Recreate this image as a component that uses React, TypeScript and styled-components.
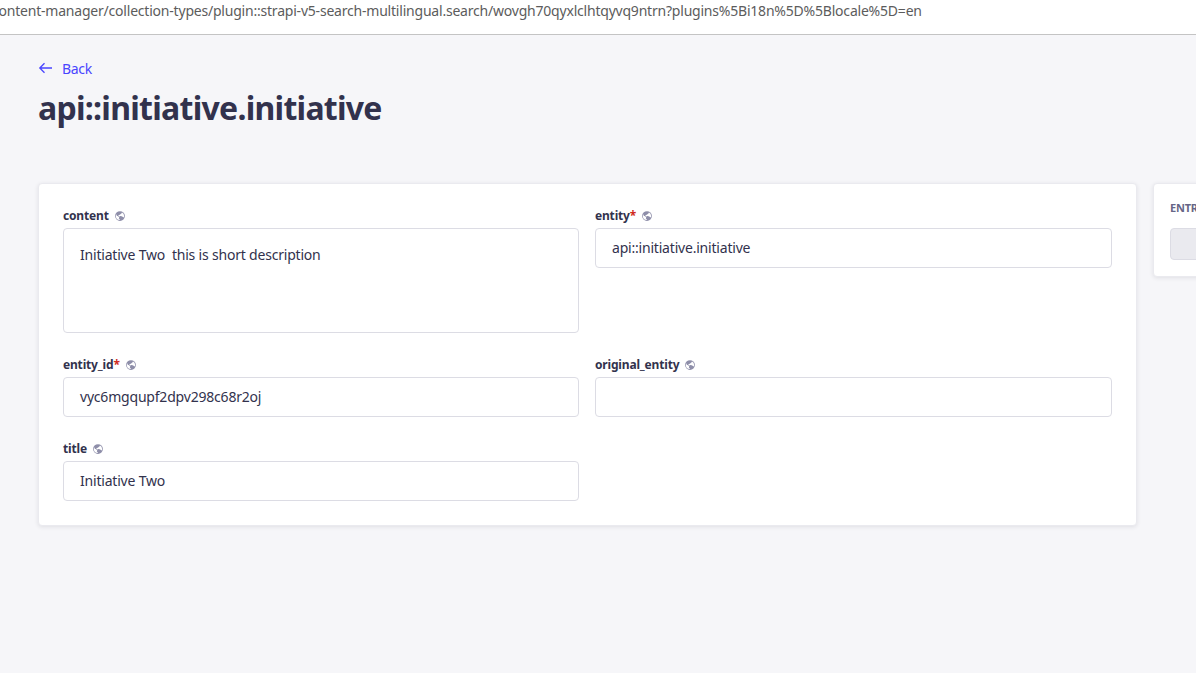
import styled, { createGlobalStyle } from 'styled-components';
import { PiGlobeHemisphereWestFill } from 'react-icons/pi';

const URL_TEXT =
  'content-manager/collection-types/plugin::strapi-v5-search-multilingual.search/wovgh70qyxlclhtqyvq9ntrn?plugins%5Bi18n%5D%5Blocale%5D=en';

type FieldProps = {
  name: string;
  value?: string;
  required?: boolean;
  multiline?: boolean;
};

function Field({ name, value = '', required, multiline }: FieldProps) {
  return (
    <FieldWrap>
      <Label>
        {name}
        {required && <Star>*</Star>}
        <Globe />
      </Label>
      <Box $multiline={multiline}>{value}</Box>
    </FieldWrap>
  );
}

export default function App() {
  return (
    <>
      <GlobalStyle />
      <Page>
        <UrlBar>
          <UrlText>{URL_TEXT}</UrlText>
        </UrlBar>
        <Main>
          <BackLink>
            <svg viewBox="0 0 14 12" width="14" height="12" fill="none" stroke="currentColor" strokeWidth="1.3">
              <path d="M14 6H2M6.5 1.2 1.8 6l4.7 4.8" />
            </svg>
            Back
          </BackLink>
          <Title>api::initiative.initiative</Title>
          <Panels>
            <FormCard>
              <Field name="content" value="Initiative Two  this is short description" multiline />
              <Field name="entity" value="api::initiative.initiative" required />
              <Field name="entity_id" value="vyc6mgqupf2dpv298c68r2oj" required />
              <Field name="original_entity" />
              <Field name="title" value="Initiative Two" />
            </FormCard>
            <SideCard>
              <SideLabel>ENTRY</SideLabel>
              <SideButton />
            </SideCard>
          </Panels>
        </Main>
      </Page>
    </>
  );
}

const GlobalStyle = createGlobalStyle`
  html, body {
    margin: 0;
    padding: 0;
    background: #f6f6f9;
  }
  * { box-sizing: border-box; }
`;

const Page = styled.div`
  width: 1196px;
  height: 673px;
  overflow: hidden;
  background: #f6f6f9;
  font-family: "Noto Sans", sans-serif;
  color: #32324d;
`;

const UrlBar = styled.div`
  height: 35px;
  background: #ffffff;
  border-bottom: 1px solid #c4c4c4;
  display: flex;
  align-items: flex-start;
  padding-top: 1px;
  overflow: hidden;
`;

const UrlText = styled.span`
  margin-left: -8px;
  font-size: 14px;
  line-height: 20px;
  letter-spacing: -0.21px;
  color: #5c5c5c;
  white-space: nowrap;
`;

const Main = styled.main`
  padding: 23px 0 0 38px;
`;

const BackLink = styled.a`
  display: flex;
  align-items: center;
  gap: 10px;
  height: 20px;
  font-size: 14px;
  letter-spacing: -0.3px;
  color: #4945ff;
  svg { flex-shrink: 0; }
`;

const Title = styled.h1`
  margin: 10px 0 0;
  font-size: 32px;
  line-height: 40px;
  font-weight: 700;
  letter-spacing: -0.73px;
  color: #32324d;
`;

const Panels = styled.div`
  display: flex;
  align-items: flex-start;
  gap: 16px;
  margin-top: 55px;
`;

const FormCard = styled.section`
  flex: 0 0 1099px;
  display: grid;
  grid-template-columns: 516px 517px;
  column-gap: 16px;
  row-gap: 24px;
  align-items: start;
  padding: 24px;
  background: #ffffff;
  border: 1px solid #eaeaef;
  border-radius: 4px;
  box-shadow: 0 1px 4px rgba(33, 33, 52, 0.1);
`;

const FieldWrap = styled.div`
  display: flex;
  flex-direction: column;
  gap: 4px;
`;

const Label = styled.label`
  display: flex;
  align-items: center;
  height: 16px;
  font-size: 12px;
  line-height: 16px;
  font-weight: 700;
  letter-spacing: -0.17px;
  color: #32324d;
`;

const Star = styled.span`
  color: #d02b20;
`;

const Globe = styled(PiGlobeHemisphereWestFill)`
  width: 12px;
  height: 12px;
  margin-left: 5px;
  color: #8e8ea9;
`;

const Box = styled.div<{ $multiline?: boolean }>`
  height: ${({ $multiline }) => ($multiline ? '105px' : '40px')};
  padding: ${({ $multiline }) => ($multiline ? '16px' : '0 16px')};
  display: ${({ $multiline }) => ($multiline ? 'block' : 'flex')};
  align-items: center;
  background: #ffffff;
  border: 1px solid #dcdce4;
  border-radius: 4px;
  font-size: 14px;
  line-height: 20px;
  letter-spacing: -0.2px;
  white-space: pre;
  color: #32324d;
`;

const SideCard = styled.aside`
  flex: 0 0 300px;
  height: 94px;
  padding: 16px;
  background: #ffffff;
  border: 1px solid #eaeaef;
  border-radius: 4px;
  box-shadow: 0 1px 4px rgba(33, 33, 52, 0.1);
`;

const SideLabel = styled.div`
  font-size: 11px;
  line-height: 16px;
  font-weight: 700;
  letter-spacing: -0.2px;
  color: #666687;
`;

const SideButton = styled.div`
  height: 32px;
  margin-top: 12px;
  background: #eaeaef;
  border: 1px solid #dcdce4;
  border-radius: 4px;
`;
